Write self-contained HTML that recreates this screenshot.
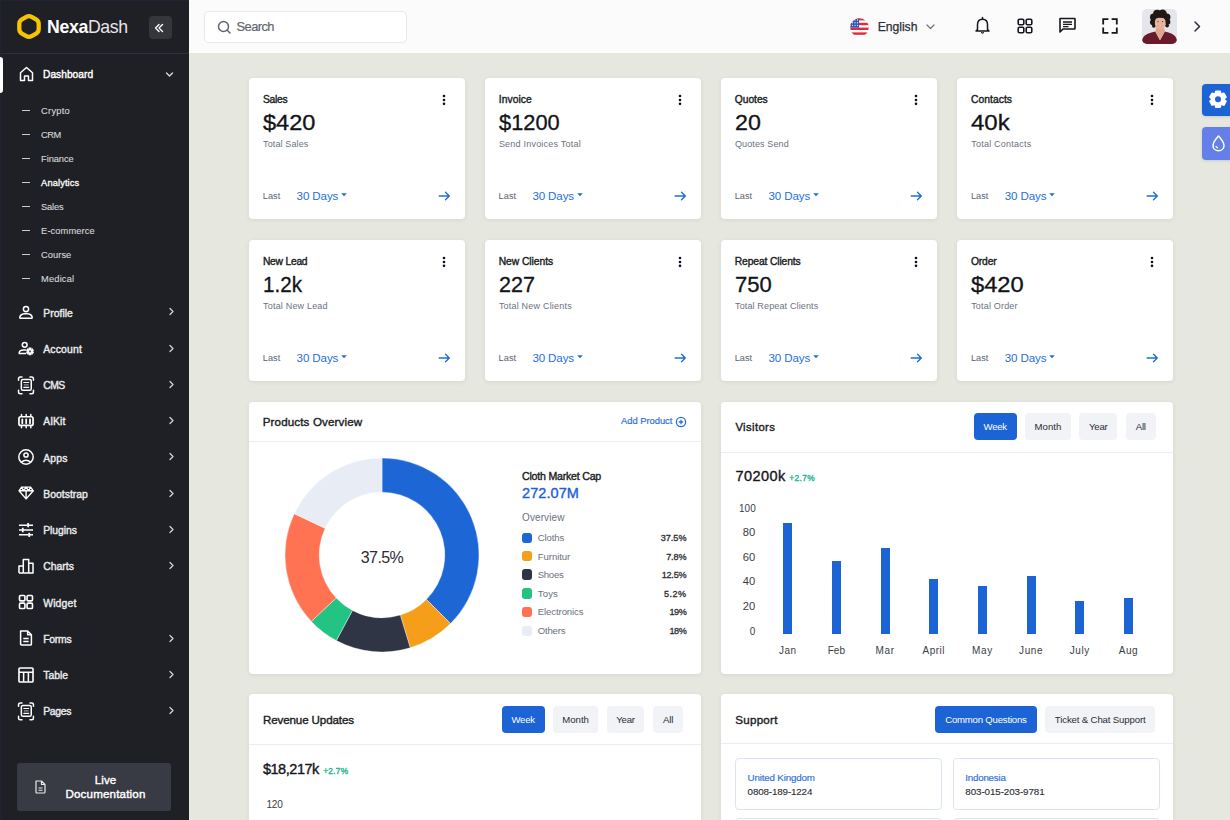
<!DOCTYPE html>
<html><head><meta charset="utf-8"><title>NexaDash</title>
<style>
html,body{margin:0;padding:0;width:1230px;height:820px;overflow:hidden;background:#e6e8e0;font-family:"Liberation Sans", sans-serif;}
.t{position:absolute;white-space:nowrap;line-height:1.1172;}
.r{position:absolute;box-sizing:border-box;}
</style></head><body>

<div class="r" style="left:0.00px;top:0.00px;width:189.00px;height:820.00px;background:#1f2025;border-radius:0px;"></div>
<div class="r" style="left:0.00px;top:53.00px;width:189.00px;height:1.00px;background:#2f3138;border-radius:0px;"></div>
<div class="r" style="left:0.00px;top:0.00px;width:189.00px;height:1.00px;background:#1d2434;border-radius:0px;"></div>
<div class="r" style="left:0.00px;top:0.00px;width:1.00px;height:820.00px;background:#1d2434;border-radius:0px;"></div>
<svg class="r" style="left:14.00px;top:11.00px;" width="30" height="31" viewBox="0 0 30 31"><path d="M12.40 5.80 Q15.00 4.30 17.60 5.80 L22.10 8.40 Q24.70 9.90 24.70 12.90 L24.70 18.10 Q24.70 21.10 22.10 22.60 L17.60 25.20 Q15.00 26.70 12.40 25.20 L7.90 22.60 Q5.30 21.10 5.30 18.10 L5.30 12.90 Q5.30 9.90 7.90 8.40 Z" fill="none" stroke="#f8c400" stroke-width="4.3" stroke-linejoin="round"/></svg>
<div class="t" style="left:47.00px;top:18.00px;font-size:17.70px;color:#fff;font-weight:400;letter-spacing:-0.350px;"><b style="font-weight:700;color:#fff">Nexa</b><span style="color:#e6e6e6">Dash</span></div>
<div class="r" style="left:149.00px;top:15.50px;width:23.00px;height:23.00px;background:#35363c;border-radius:4px;"></div>
<svg class="r" style="left:152.80px;top:21.60px;" width="12" height="12" viewBox="0 0 12 12"><path d="M6 2.5 L2.5 6 L6 9.5 M9.5 2.5 L6 6 L9.5 9.5" fill="none" stroke="#fff" stroke-width="1.4" stroke-linecap="round" stroke-linejoin="round"/></svg>
<div class="r" style="left:0.00px;top:57.00px;width:3.20px;height:36.20px;background:#ffffff;border-radius:0px;border-radius:0 3px 3px 0;"></div>
<svg class="r" style="left:19.00px;top:66.00px;" width="15" height="16" viewBox="0 0 15 16"><path d="M1.5 6.8 L7.5 1.5 L13.5 6.8 V14.5 H9.5 V10 H5.5 V14.5 H1.5 Z" fill="none" stroke="#fff" stroke-width="1.5" stroke-linejoin="round"/></svg>
<div class="t" style="left:43.00px;top:69.00px;font-size:10.20px;color:#fff;font-weight:400;letter-spacing:0.033px;-webkit-text-stroke:0.38px #fff;">Dashboard</div>
<svg class="r" style="left:165.00px;top:71.00px;" width="9" height="7" viewBox="0 0 9 7"><path d="M1.5 2 L4.5 5 L7.5 2" fill="none" stroke="#d8d9de" stroke-width="1.4" stroke-linecap="round" stroke-linejoin="round"/></svg>
<div class="r" style="left:22.40px;top:109.90px;width:7.80px;height:1.20px;background:#c9cacf;border-radius:0px;"></div>
<div class="t" style="left:41.10px;top:106.00px;font-size:9.30px;color:#d5d6da;font-weight:400;letter-spacing:0.236px;-webkit-text-stroke:0.38px #d5d6da;-webkit-text-stroke-width:0.12px;">Crypto</div>
<div class="r" style="left:22.40px;top:133.90px;width:7.80px;height:1.20px;background:#c9cacf;border-radius:0px;"></div>
<div class="t" style="left:41.10px;top:130.00px;font-size:9.30px;color:#d5d6da;font-weight:400;letter-spacing:-0.558px;-webkit-text-stroke:0.38px #d5d6da;-webkit-text-stroke-width:0.12px;">CRM</div>
<div class="r" style="left:22.40px;top:157.90px;width:7.80px;height:1.20px;background:#c9cacf;border-radius:0px;"></div>
<div class="t" style="left:41.10px;top:154.00px;font-size:9.30px;color:#d5d6da;font-weight:400;letter-spacing:-0.084px;-webkit-text-stroke:0.38px #d5d6da;-webkit-text-stroke-width:0.12px;">Finance</div>
<div class="r" style="left:22.40px;top:181.90px;width:7.80px;height:1.20px;background:#c9cacf;border-radius:0px;"></div>
<div class="t" style="left:41.10px;top:178.00px;font-size:9.30px;color:#ffffff;font-weight:400;letter-spacing:0.109px;-webkit-text-stroke:0.38px #ffffff;-webkit-text-stroke-width:0.3px;">Analytics</div>
<div class="r" style="left:22.40px;top:205.90px;width:7.80px;height:1.20px;background:#c9cacf;border-radius:0px;"></div>
<div class="t" style="left:41.10px;top:202.00px;font-size:9.30px;color:#d5d6da;font-weight:400;letter-spacing:-0.198px;-webkit-text-stroke:0.38px #d5d6da;-webkit-text-stroke-width:0.12px;">Sales</div>
<div class="r" style="left:22.40px;top:229.90px;width:7.80px;height:1.20px;background:#c9cacf;border-radius:0px;"></div>
<div class="t" style="left:41.10px;top:226.00px;font-size:9.30px;color:#d5d6da;font-weight:400;letter-spacing:0.085px;-webkit-text-stroke:0.38px #d5d6da;-webkit-text-stroke-width:0.12px;">E-commerce</div>
<div class="r" style="left:22.40px;top:253.90px;width:7.80px;height:1.20px;background:#c9cacf;border-radius:0px;"></div>
<div class="t" style="left:41.10px;top:250.00px;font-size:9.30px;color:#d5d6da;font-weight:400;letter-spacing:0.038px;-webkit-text-stroke:0.38px #d5d6da;-webkit-text-stroke-width:0.12px;">Course</div>
<div class="r" style="left:22.40px;top:277.90px;width:7.80px;height:1.20px;background:#c9cacf;border-radius:0px;"></div>
<div class="t" style="left:41.10px;top:274.00px;font-size:9.30px;color:#d5d6da;font-weight:400;letter-spacing:0.154px;-webkit-text-stroke:0.38px #d5d6da;-webkit-text-stroke-width:0.12px;">Medical</div>
<svg class="r" style="left:16.10px;top:302.20px;" width="20" height="20" viewBox="0 0 20 20"><circle cx="10" cy="7.0" r="2.6" fill="none" stroke="#fff" stroke-linecap="round" stroke-linejoin="round" stroke-width="1.5"/><path d="M4.6 16.2 Q3.8 16.2 3.8 15.4 Q4 11.6 10 11.4 Q16 11.6 16.2 15.4 Q16.2 16.2 15.4 16.2 Z" fill="none" stroke="#fff" stroke-linecap="round" stroke-linejoin="round" stroke-width="1.5"/></svg>
<div class="t" style="left:43.20px;top:308.00px;font-size:10.40px;color:#ececee;font-weight:400;letter-spacing:0.044px;-webkit-text-stroke:0.38px #ececee;">Profile</div>
<svg class="r" style="left:168.00px;top:307.40px;" width="7" height="9" viewBox="0 0 7 9"><path d="M2 1.5 L5 4.5 L2 7.5" fill="none" stroke="#d0d1d6" stroke-width="1.3" stroke-linecap="round" stroke-linejoin="round"/></svg>
<svg class="r" style="left:16.10px;top:338.45px;" width="20" height="20" viewBox="0 0 20 20"><circle cx="8.7" cy="6.85" r="2.4" fill="none" stroke="#fff" stroke-linecap="round" stroke-linejoin="round" stroke-width="1.5"/><path d="M9.6 12 H7.6 Q3.2 12.1 3.2 15 V15.6 H9.6" fill="none" stroke="#fff" stroke-linecap="round" stroke-linejoin="round" stroke-width="1.5"/><path d="M12.774 10.994 L12.750 9.811 L15.250 9.811 L15.226 10.994 L15.471 11.136 L16.483 10.523 L17.733 12.688 L16.696 13.259 L16.696 13.541 L17.733 14.112 L16.483 16.277 L15.471 15.664 L15.226 15.806 L15.250 16.989 L12.750 16.989 L12.774 15.806 L12.529 15.664 L11.517 16.277 L10.267 14.112 L11.304 13.541 L11.304 13.259 L10.267 12.688 L11.517 10.523 L12.529 11.136 Z M15.100 13.400 A1.1 1.1 0 1 0 12.900 13.400 A1.1 1.1 0 1 0 15.100 13.400 Z" fill="#fff" fill-rule="evenodd" stroke="#fff" stroke-width="0.5" stroke-linejoin="round"/></svg>
<div class="t" style="left:43.20px;top:344.00px;font-size:10.40px;color:#ececee;font-weight:400;letter-spacing:0.195px;-webkit-text-stroke:0.38px #ececee;">Account</div>
<svg class="r" style="left:168.00px;top:343.65px;" width="7" height="9" viewBox="0 0 7 9"><path d="M2 1.5 L5 4.5 L2 7.5" fill="none" stroke="#d0d1d6" stroke-width="1.3" stroke-linecap="round" stroke-linejoin="round"/></svg>
<svg class="r" style="left:16.10px;top:374.70px;" width="20" height="20" viewBox="0 0 20 20"><path d="M2.55 5.3 V3.7 Q2.55 1.95 4.3 1.95 H6 M14 1.95 H15.7 Q17.45 1.95 17.45 3.7 V5.3 M17.45 15.3 V16.9 Q17.45 18.65 15.7 18.65 H14 M6 18.65 H4.3 Q2.55 18.65 2.55 16.9 V15.3" fill="none" stroke="#fff" stroke-linecap="round" stroke-linejoin="round" stroke-width="1.5"/><rect x="5.35" y="4.45" width="9.9" height="10.8" rx="1.6" fill="none" stroke="#fff" stroke-linecap="round" stroke-linejoin="round" stroke-width="1.5"/><path d="M7.8 7.5 H12.7 M7.8 12.3 H12.7" fill="none" stroke="#fff" stroke-linecap="round" stroke-linejoin="round" stroke-width="1.2"/><path d="M7.8 9.9 H12.7" stroke="#9a9ba0" stroke-width="1.2"/></svg>
<div class="t" style="left:43.20px;top:380.00px;font-size:10.40px;color:#ececee;font-weight:400;letter-spacing:-0.539px;-webkit-text-stroke:0.38px #ececee;">CMS</div>
<svg class="r" style="left:168.00px;top:379.90px;" width="7" height="9" viewBox="0 0 7 9"><path d="M2 1.5 L5 4.5 L2 7.5" fill="none" stroke="#d0d1d6" stroke-width="1.3" stroke-linecap="round" stroke-linejoin="round"/></svg>
<svg class="r" style="left:16.10px;top:410.95px;" width="20" height="20" viewBox="0 0 20 20"><rect x="2.95" y="5.75" width="14.1" height="8.7" rx="1.8" fill="none" stroke="#fff" stroke-linecap="round" stroke-linejoin="round" stroke-width="1.7"/><path d="M5.5 3.4 V5.2 M10.2 3.4 V5.2 M14.8 3.4 V5.2 M5.5 15 V16.8 M10.2 15 V16.8 M14.8 15 V16.8" fill="none" stroke="#fff" stroke-linecap="round" stroke-linejoin="round" stroke-width="1.5"/><path d="M6.3 8.3 V12.2 M10.2 8.3 V12.2 M14 8.3 V12.2" fill="none" stroke="#fff" stroke-linecap="round" stroke-linejoin="round" stroke-width="1.8"/></svg>
<div class="t" style="left:43.20px;top:416.00px;font-size:10.40px;color:#ececee;font-weight:400;letter-spacing:0.041px;-webkit-text-stroke:0.38px #ececee;">AIKit</div>
<svg class="r" style="left:168.00px;top:416.15px;" width="7" height="9" viewBox="0 0 7 9"><path d="M2 1.5 L5 4.5 L2 7.5" fill="none" stroke="#d0d1d6" stroke-width="1.3" stroke-linecap="round" stroke-linejoin="round"/></svg>
<svg class="r" style="left:16.10px;top:447.20px;" width="20" height="20" viewBox="0 0 20 20"><circle cx="10" cy="10" r="7.2" fill="none" stroke="#fff" stroke-linecap="round" stroke-linejoin="round" stroke-width="1.5"/><circle cx="10" cy="8" r="2.1" fill="none" stroke="#fff" stroke-linecap="round" stroke-linejoin="round" stroke-width="1.5"/><path d="M5.4 15.1 Q10 11.6 14.6 15.1" fill="none" stroke="#fff" stroke-linecap="round" stroke-linejoin="round" stroke-width="1.5"/></svg>
<div class="t" style="left:43.20px;top:453.00px;font-size:10.40px;color:#ececee;font-weight:400;letter-spacing:0.176px;-webkit-text-stroke:0.38px #ececee;">Apps</div>
<svg class="r" style="left:168.00px;top:452.40px;" width="7" height="9" viewBox="0 0 7 9"><path d="M2 1.5 L5 4.5 L2 7.5" fill="none" stroke="#d0d1d6" stroke-width="1.3" stroke-linecap="round" stroke-linejoin="round"/></svg>
<svg class="r" style="left:16.10px;top:483.45px;" width="20" height="20" viewBox="0 0 20 20"><path d="M5.6 4.1 H14.6 L17.3 7.8 L10.1 15.9 L3 7.8 Z M3 7.8 H17.3 M5.6 4.1 L7.6 7.8 L10.1 4.1 L12.6 7.8 L14.6 4.1 M10.1 7.8 V14.6" fill="none" stroke="#fff" stroke-linecap="round" stroke-linejoin="round" stroke-width="1.4"/></svg>
<div class="t" style="left:43.20px;top:489.00px;font-size:10.40px;color:#ececee;font-weight:400;letter-spacing:0.029px;-webkit-text-stroke:0.38px #ececee;">Bootstrap</div>
<svg class="r" style="left:168.00px;top:488.65px;" width="7" height="9" viewBox="0 0 7 9"><path d="M2 1.5 L5 4.5 L2 7.5" fill="none" stroke="#d0d1d6" stroke-width="1.3" stroke-linecap="round" stroke-linejoin="round"/></svg>
<svg class="r" style="left:16.10px;top:519.70px;" width="20" height="20" viewBox="0 0 20 20"><g transform="translate(10,10) scale(1.08) translate(-7.5,-7.5)"><path d="M1 3 H14 M1 7.5 H14 M1 12 H14" stroke="#fff" stroke-width="1.4"/><path d="M9.5 1 V5 M4.5 5.5 V9.5 M10.5 10 V14" stroke="#fff" stroke-width="1.6"/></g></svg>
<div class="t" style="left:43.20px;top:525.00px;font-size:10.40px;color:#ececee;font-weight:400;letter-spacing:-0.063px;-webkit-text-stroke:0.38px #ececee;">Plugins</div>
<svg class="r" style="left:168.00px;top:524.90px;" width="7" height="9" viewBox="0 0 7 9"><path d="M2 1.5 L5 4.5 L2 7.5" fill="none" stroke="#d0d1d6" stroke-width="1.3" stroke-linecap="round" stroke-linejoin="round"/></svg>
<svg class="r" style="left:16.10px;top:555.95px;" width="20" height="20" viewBox="0 0 20 20"><g transform="translate(10,10) scale(1.08) translate(-7.5,-7.5)"><path d="M1 14 V7.5 H5 V14 M5 14 V1.5 H10 V14 M10 14 V5 H14 V14 Z M1 14 H14" fill="none" stroke="#fff" stroke-width="1.4" stroke-linejoin="round"/></g></svg>
<div class="t" style="left:43.20px;top:561.00px;font-size:10.40px;color:#ececee;font-weight:400;letter-spacing:0.021px;-webkit-text-stroke:0.38px #ececee;">Charts</div>
<svg class="r" style="left:168.00px;top:561.15px;" width="7" height="9" viewBox="0 0 7 9"><path d="M2 1.5 L5 4.5 L2 7.5" fill="none" stroke="#d0d1d6" stroke-width="1.3" stroke-linecap="round" stroke-linejoin="round"/></svg>
<svg class="r" style="left:16.10px;top:592.20px;" width="20" height="20" viewBox="0 0 20 20"><g transform="translate(10,10) scale(1.08) translate(-7.5,-7.5)"><rect x="1.5" y="1.5" width="5" height="5" rx="1" fill="none" stroke="#fff" stroke-width="1.5"/><rect x="8.5" y="1.5" width="5" height="5" rx="1" fill="none" stroke="#fff" stroke-width="1.5"/><rect x="1.5" y="8.5" width="5" height="5" rx="1" fill="none" stroke="#fff" stroke-width="1.5"/><rect x="8.5" y="8.5" width="5" height="5" rx="1" fill="none" stroke="#fff" stroke-width="1.5"/></g></svg>
<div class="t" style="left:43.20px;top:598.00px;font-size:10.40px;color:#ececee;font-weight:400;letter-spacing:0.154px;-webkit-text-stroke:0.38px #ececee;">Widget</div>
<svg class="r" style="left:16.10px;top:628.45px;" width="20" height="20" viewBox="0 0 20 20"><g transform="translate(10,10) scale(1.08) translate(-7.5,-7.5)"><path d="M2.5 1 H9 L12.5 4.5 V13 Q12.5 14 11.5 14 H3.5 Q2.5 14 2.5 13 Z M9 1 V4.5 H12.5" fill="none" stroke="#fff" stroke-width="1.4" stroke-linejoin="round"/><path d="M5 8 H10 M5 10.8 H10" stroke="#fff" stroke-width="1.3"/></g></svg>
<div class="t" style="left:43.20px;top:634.00px;font-size:10.40px;color:#ececee;font-weight:400;letter-spacing:-0.230px;-webkit-text-stroke:0.38px #ececee;">Forms</div>
<svg class="r" style="left:168.00px;top:633.65px;" width="7" height="9" viewBox="0 0 7 9"><path d="M2 1.5 L5 4.5 L2 7.5" fill="none" stroke="#d0d1d6" stroke-width="1.3" stroke-linecap="round" stroke-linejoin="round"/></svg>
<svg class="r" style="left:16.10px;top:664.70px;" width="20" height="20" viewBox="0 0 20 20"><g transform="translate(10,10) scale(1.08) translate(-7.5,-7.5)"><rect x="1" y="1" width="13" height="13" rx="1" fill="none" stroke="#fff" stroke-width="1.5"/><path d="M1 5 H14 M5.3 5 V14 M9.7 5 V14" stroke="#fff" stroke-width="1.4"/></g></svg>
<div class="t" style="left:43.20px;top:670.00px;font-size:10.40px;color:#ececee;font-weight:400;letter-spacing:0.018px;-webkit-text-stroke:0.38px #ececee;">Table</div>
<svg class="r" style="left:168.00px;top:669.90px;" width="7" height="9" viewBox="0 0 7 9"><path d="M2 1.5 L5 4.5 L2 7.5" fill="none" stroke="#d0d1d6" stroke-width="1.3" stroke-linecap="round" stroke-linejoin="round"/></svg>
<svg class="r" style="left:16.10px;top:700.95px;" width="20" height="20" viewBox="0 0 20 20"><path d="M2.55 5.3 V3.7 Q2.55 1.95 4.3 1.95 H6 M14 1.95 H15.7 Q17.45 1.95 17.45 3.7 V5.3 M17.45 15.3 V16.9 Q17.45 18.65 15.7 18.65 H14 M6 18.65 H4.3 Q2.55 18.65 2.55 16.9 V15.3" fill="none" stroke="#fff" stroke-linecap="round" stroke-linejoin="round" stroke-width="1.5"/><rect x="5.35" y="4.45" width="9.9" height="10.8" rx="1.6" fill="none" stroke="#fff" stroke-linecap="round" stroke-linejoin="round" stroke-width="1.5"/><path d="M7.8 7.5 H12.7 M7.8 12.3 H12.7" fill="none" stroke="#fff" stroke-linecap="round" stroke-linejoin="round" stroke-width="1.2"/><path d="M7.8 9.9 H12.7" stroke="#9a9ba0" stroke-width="1.2"/></svg>
<div class="t" style="left:43.20px;top:706.00px;font-size:10.40px;color:#ececee;font-weight:400;letter-spacing:-0.313px;-webkit-text-stroke:0.38px #ececee;">Pages</div>
<svg class="r" style="left:168.00px;top:706.15px;" width="7" height="9" viewBox="0 0 7 9"><path d="M2 1.5 L5 4.5 L2 7.5" fill="none" stroke="#d0d1d6" stroke-width="1.3" stroke-linecap="round" stroke-linejoin="round"/></svg>
<div class="r" style="left:17.00px;top:763.20px;width:154.20px;height:47.60px;background:#393b44;border-radius:3px;"></div>
<svg class="r" style="left:34.00px;top:780.00px;" width="13" height="14" viewBox="0 0 13 14"><path d="M2 1 H7.5 L11 4.5 V12 Q11 13 10 13 H3 Q2 13 2 12 Z M7.5 1 V4.5 H11" fill="none" stroke="#e8e8ea" stroke-width="1.2" stroke-linejoin="round"/><path d="M4.5 8 H8.5 M4.5 10.3 H8.5" stroke="#e8e8ea" stroke-width="1.1"/></svg>
<div class="t" style="left:-94.50px;width:400px;text-align:center;top:774.00px;font-size:11.60px;color:#fff;font-weight:400;letter-spacing:0.061px;-webkit-text-stroke:0.38px #fff;">Live</div>
<div class="t" style="left:-94.50px;width:400px;text-align:center;top:788.00px;font-size:11.60px;color:#fff;font-weight:400;letter-spacing:0.173px;-webkit-text-stroke:0.38px #fff;">Documentation</div>
<div class="r" style="left:189.00px;top:0.00px;width:1041.00px;height:53.00px;background:#fbfbfb;border-radius:0px;"></div>
<div class="r" style="left:204.30px;top:11.00px;width:203.00px;height:31.60px;background:#ffffff;border-radius:5px;border:1px solid #e7e8eb;"></div>
<svg class="r" style="left:217.00px;top:20.00px;" width="15" height="15" viewBox="0 0 15 15"><circle cx="6.5" cy="6.5" r="5" fill="none" stroke="#5f6672" stroke-width="1.5"/><path d="M10.3 10.3 L13 13" stroke="#5f6672" stroke-width="1.5" stroke-linecap="round"/></svg>
<div class="t" style="left:236.50px;top:20.00px;font-size:12.90px;color:#5f6672;font-weight:400;letter-spacing:-0.566px;-webkit-text-stroke:0.38px #5f6672;-webkit-text-stroke-width:0.2px;">Search</div>
<svg class="r" style="left:850.00px;top:17.60px;" width="19" height="19" viewBox="0 0 19 19"><defs><clipPath id="fc"><circle cx="9.5" cy="9.5" r="9.3"/></clipPath></defs>
<g clip-path="url(#fc)"><rect width="19" height="19" fill="#fff"/>
<rect y="0" width="19" height="2.4" fill="#e0293a"/><rect y="4.8" width="19" height="2.4" fill="#e0293a"/><rect y="9.6" width="19" height="2.4" fill="#e0293a"/><rect y="14.4" width="19" height="2.4" fill="#e0293a"/>
<rect width="9" height="9.6" fill="#2c55b4"/>
<g fill="#fff" opacity="0.85"><circle cx="2.5" cy="2" r="0.7"/><circle cx="5" cy="2" r="0.7"/><circle cx="7.5" cy="2" r="0.7"/><circle cx="2.5" cy="4.7" r="0.7"/><circle cx="5" cy="4.7" r="0.7"/><circle cx="7.5" cy="4.7" r="0.7"/><circle cx="2.5" cy="7.4" r="0.7"/><circle cx="5" cy="7.4" r="0.7"/><circle cx="7.5" cy="7.4" r="0.7"/></g></g></svg>
<div class="t" style="left:877.70px;top:21.00px;font-size:12.20px;color:#2b2e36;font-weight:400;letter-spacing:-0.033px;-webkit-text-stroke:0.38px #2b2e36;-webkit-text-stroke-width:0.25px;">English</div>
<svg class="r" style="left:925.00px;top:22.00px;" width="11" height="9" viewBox="0 0 11 9"><path d="M2 3 L5.5 6.5 L9 3" fill="none" stroke="#6b7280" stroke-width="1.2" stroke-linecap="round" stroke-linejoin="round"/></svg>
<svg class="r" style="left:974.00px;top:16.00px;" width="17" height="19" viewBox="0 0 17 19"><path d="M3.5 13.5 V8.5 C3.5 5.3 5.5 3.2 8.5 3.2 C11.5 3.2 13.5 5.3 13.5 8.5 V13.5 L15 15 H2 L3.5 13.5 Z" fill="none" stroke="#15171c" stroke-width="1.5" stroke-linejoin="round"/><path d="M8.5 1.5 V3.2" stroke="#15171c" stroke-width="1.5" stroke-linecap="round"/><path d="M7 16.5 Q8.5 18 10 16.5" fill="#15171c" stroke="#15171c" stroke-width="1"/></svg>
<svg class="r" style="left:1016.00px;top:17.00px;" width="18" height="18" viewBox="0 0 18 18"><rect x="2.2" y="2.2" width="5.6" height="5.6" rx="1.3" fill="none" stroke="#15171c" stroke-width="1.6"/><rect x="10.2" y="2.2" width="5.6" height="5.6" rx="1.3" fill="none" stroke="#15171c" stroke-width="1.6"/><rect x="2.2" y="10.2" width="5.6" height="5.6" rx="1.3" fill="none" stroke="#15171c" stroke-width="1.6"/><rect x="10.2" y="10.2" width="5.6" height="5.6" rx="1.3" fill="none" stroke="#15171c" stroke-width="1.6"/></svg>
<svg class="r" style="left:1058.00px;top:16.00px;" width="19" height="18" viewBox="0 0 19 18"><path d="M2 2.5 H16.5 Q17 2.5 17 3 V12.5 Q17 13 16.5 13 H5 L2 16 V3 Q2 2.5 2.5 2.5 Z" fill="none" stroke="#15171c" stroke-width="1.6" stroke-linejoin="round"/><path d="M5 6 H14 M5 8.3 H14 M5 10.6 H10.5" stroke="#15171c" stroke-width="1.3"/></svg>
<svg class="r" style="left:1101.00px;top:17.00px;" width="18" height="18" viewBox="0 0 18 18"><path d="M2.2 6.5 V2.2 H6.5 M11.5 2.2 H15.8 V6.5 M15.8 11.5 V15.8 H11.5 M6.5 15.8 H2.2 V11.5" fill="none" stroke="#15171c" stroke-width="1.8" stroke-linecap="square"/></svg>
<svg class="r" style="left:1141.80px;top:8.80px;" width="35" height="35" viewBox="0 0 35 35"><defs><clipPath id="av"><rect width="35" height="35" rx="5"/></clipPath></defs>
<g clip-path="url(#av)"><rect width="35" height="35" fill="#e5e6eb"/>
<g fill="#201814"><circle cx="11.6" cy="8.2" r="3.6"/><circle cx="15.2" cy="4.9" r="4.1"/><circle cx="20.6" cy="4.6" r="4.2"/><circle cx="24.8" cy="8.2" r="3.6"/><circle cx="10.9" cy="13.2" r="2.9"/><circle cx="25.7" cy="13" r="2.7"/><circle cx="11.8" cy="16.8" r="1.9"/><circle cx="25.1" cy="16.6" r="1.9"/></g>
<path d="M0 35 V31 Q1 25.8 9.5 23.6 L13.3 22.6 L18 31.2 L22.8 22.6 L26.5 23.6 Q34 25.8 35 31 V35 Z" fill="#6b1a2b"/>
<path d="M14.2 18 L13.3 22.6 L18 31.2 L22.8 22.6 L22 18 Z" fill="#dea88e"/>
<ellipse cx="18.2" cy="13.6" rx="5.4" ry="6.6" fill="#e6b39c"/>
<path d="M12.6 10.8 Q13.6 6.2 18.2 6.8 Q22.8 6.2 23.8 10.8 Q22 8.6 18.2 8.9 Q14.3 8.6 12.6 10.8 Z" fill="#201814"/>
<circle cx="16" cy="12.6" r="0.65" fill="#5a3a30"/><circle cx="20.5" cy="12.6" r="0.65" fill="#5a3a30"/>
<path d="M15.9 16.2 Q18.2 18.3 20.5 16.2" fill="#f4e6e0" stroke="#b87865" stroke-width="0.5"/>
</g></svg>
<svg class="r" style="left:1192.00px;top:20.00px;" width="11" height="13" viewBox="0 0 11 13"><path d="M3 2 L7.5 6.5 L3 11" fill="none" stroke="#2a3040" stroke-width="1.5" stroke-linecap="round" stroke-linejoin="round"/></svg>
<div class="r" style="left:1202.00px;top:84.00px;width:33.00px;height:32.30px;background:#1c64d6;border-radius:4px;box-shadow:0 1px 3px rgba(0,0,0,.12);"></div>
<svg class="r" style="left:1206.00px;top:87.20px;" width="24" height="24" viewBox="0 0 24 24"><path d="M9.460 6.875 L9.904 4.376 L14.096 4.376 L14.540 6.875 L15.342 7.338 L17.728 6.472 L19.824 10.104 L17.882 11.737 L17.882 12.663 L19.824 14.296 L17.728 17.928 L15.342 17.062 L14.540 17.525 L14.096 20.024 L9.904 20.024 L9.460 17.525 L8.658 17.062 L6.272 17.928 L4.176 14.296 L6.118 12.663 L6.118 11.737 L4.176 10.104 L6.272 6.472 L8.658 7.338 Z M16.000 12.200 A4.0 4.0 0 1 0 8.000 12.200 A4.0 4.0 0 1 0 16.000 12.200 Z" fill="#fff" fill-rule="evenodd" stroke="#fff" stroke-width="2.0" stroke-linejoin="round"/></svg>
<div class="r" style="left:1202.00px;top:127.30px;width:33.00px;height:32.30px;background:#6480e8;border-radius:4px;box-shadow:0 1px 3px rgba(0,0,0,.12);"></div>
<svg class="r" style="left:1210.00px;top:134.00px;" width="17" height="19" viewBox="0 0 17 19"><path d="M8.5 2 C8.5 2 3 8 3 11.5 C3 14.6 5.5 16.8 8.5 16.8 C11.5 16.8 14 14.6 14 11.5 C14 8 8.5 2 8.5 2 Z" fill="none" stroke="#fff" stroke-width="1.5" stroke-linejoin="round"/><path d="M6 12.5 L7.5 13.8" stroke="#fff" stroke-width="1.2" stroke-linecap="round"/></svg>
<div class="r" style="left:249.00px;top:78.00px;width:216.30px;height:141.40px;background:#ffffff;border-radius:4px;box-shadow:0 1px 4px rgba(60,70,50,.10);"></div>
<div class="t" style="left:262.90px;top:94.00px;font-size:10.30px;color:#1a1c22;font-weight:400;letter-spacing:-0.263px;-webkit-text-stroke:0.38px #1a1c22;">Sales</div>
<div class="t" style="left:263.10px;top:112.00px;font-size:21.40px;color:#121418;font-weight:400;transform:scaleX(1.1019);transform-origin:left;-webkit-text-stroke:0.38px #121418;-webkit-text-stroke-width:0.3px;">$420</div>
<div class="t" style="left:263.10px;top:139.00px;font-size:9.00px;color:#6b7280;font-weight:400;letter-spacing:0.113px;">Total Sales</div>
<div class="t" style="left:262.80px;top:191.00px;font-size:9.20px;color:#5b6270;font-weight:400;letter-spacing:0.031px;">Last</div>
<div class="t" style="left:296.60px;top:190.00px;font-size:11.60px;color:#1f6fd8;font-weight:400;letter-spacing:-0.128px;">30 Days</div>
<svg class="r" style="left:341.20px;top:193.30px;" width="6" height="4" viewBox="0 0 6 4"><path d="M0.2 0.2 H5.8 L3 3.2 Z" fill="#1f6fd8"/></svg>
<svg class="r" style="left:437.80px;top:191.00px;" width="13" height="10" viewBox="0 0 13 10"><path d="M1.2 5 H11.2 M7.5 1.2 L11.3 5 L7.5 8.8" fill="none" stroke="#1f6fd8" stroke-width="1.4" stroke-linecap="round" stroke-linejoin="round"/></svg>
<svg class="r" style="left:440.80px;top:92.60px;" width="6" height="13" viewBox="0 0 6 13"><circle cx="3" cy="3.05" r="1.3" fill="#0d1020"/><circle cx="3" cy="6.95" r="1.3" fill="#0d1020"/><circle cx="3" cy="10.85" r="1.3" fill="#0d1020"/></svg>
<div class="r" style="left:484.80px;top:78.00px;width:216.30px;height:141.40px;background:#ffffff;border-radius:4px;box-shadow:0 1px 4px rgba(60,70,50,.10);"></div>
<div class="t" style="left:498.70px;top:94.00px;font-size:10.30px;color:#1a1c22;font-weight:400;letter-spacing:0.079px;-webkit-text-stroke:0.38px #1a1c22;">Invoice</div>
<div class="t" style="left:498.90px;top:112.00px;font-size:21.40px;color:#121418;font-weight:400;transform:scaleX(1.0200);transform-origin:left;-webkit-text-stroke:0.38px #121418;-webkit-text-stroke-width:0.3px;">$1200</div>
<div class="t" style="left:498.90px;top:139.00px;font-size:9.00px;color:#6b7280;font-weight:400;letter-spacing:0.215px;">Send Invoices Total</div>
<div class="t" style="left:498.60px;top:191.00px;font-size:9.20px;color:#5b6270;font-weight:400;letter-spacing:0.031px;">Last</div>
<div class="t" style="left:532.40px;top:190.00px;font-size:11.60px;color:#1f6fd8;font-weight:400;letter-spacing:-0.128px;">30 Days</div>
<svg class="r" style="left:577.00px;top:193.30px;" width="6" height="4" viewBox="0 0 6 4"><path d="M0.2 0.2 H5.8 L3 3.2 Z" fill="#1f6fd8"/></svg>
<svg class="r" style="left:673.60px;top:191.00px;" width="13" height="10" viewBox="0 0 13 10"><path d="M1.2 5 H11.2 M7.5 1.2 L11.3 5 L7.5 8.8" fill="none" stroke="#1f6fd8" stroke-width="1.4" stroke-linecap="round" stroke-linejoin="round"/></svg>
<svg class="r" style="left:676.60px;top:92.60px;" width="6" height="13" viewBox="0 0 6 13"><circle cx="3" cy="3.05" r="1.3" fill="#0d1020"/><circle cx="3" cy="6.95" r="1.3" fill="#0d1020"/><circle cx="3" cy="10.85" r="1.3" fill="#0d1020"/></svg>
<div class="r" style="left:720.90px;top:78.00px;width:216.30px;height:141.40px;background:#ffffff;border-radius:4px;box-shadow:0 1px 4px rgba(60,70,50,.10);"></div>
<div class="t" style="left:734.80px;top:94.00px;font-size:10.30px;color:#1a1c22;font-weight:400;letter-spacing:-0.058px;-webkit-text-stroke:0.38px #1a1c22;">Quotes</div>
<div class="t" style="left:735.00px;top:112.00px;font-size:21.40px;color:#121418;font-weight:400;transform:scaleX(1.0854);transform-origin:left;-webkit-text-stroke:0.38px #121418;-webkit-text-stroke-width:0.3px;">20</div>
<div class="t" style="left:735.00px;top:139.00px;font-size:9.00px;color:#6b7280;font-weight:400;letter-spacing:0.111px;">Quotes Send</div>
<div class="t" style="left:734.70px;top:191.00px;font-size:9.20px;color:#5b6270;font-weight:400;letter-spacing:0.031px;">Last</div>
<div class="t" style="left:768.50px;top:190.00px;font-size:11.60px;color:#1f6fd8;font-weight:400;letter-spacing:-0.128px;">30 Days</div>
<svg class="r" style="left:813.10px;top:193.30px;" width="6" height="4" viewBox="0 0 6 4"><path d="M0.2 0.2 H5.8 L3 3.2 Z" fill="#1f6fd8"/></svg>
<svg class="r" style="left:909.70px;top:191.00px;" width="13" height="10" viewBox="0 0 13 10"><path d="M1.2 5 H11.2 M7.5 1.2 L11.3 5 L7.5 8.8" fill="none" stroke="#1f6fd8" stroke-width="1.4" stroke-linecap="round" stroke-linejoin="round"/></svg>
<svg class="r" style="left:912.70px;top:92.60px;" width="6" height="13" viewBox="0 0 6 13"><circle cx="3" cy="3.05" r="1.3" fill="#0d1020"/><circle cx="3" cy="6.95" r="1.3" fill="#0d1020"/><circle cx="3" cy="10.85" r="1.3" fill="#0d1020"/></svg>
<div class="r" style="left:957.10px;top:78.00px;width:216.30px;height:141.40px;background:#ffffff;border-radius:4px;box-shadow:0 1px 4px rgba(60,70,50,.10);"></div>
<div class="t" style="left:971.00px;top:94.00px;font-size:10.30px;color:#1a1c22;font-weight:400;letter-spacing:0.053px;-webkit-text-stroke:0.38px #1a1c22;">Contacts</div>
<div class="t" style="left:971.20px;top:112.00px;font-size:21.40px;color:#121418;font-weight:400;transform:scaleX(1.1235);transform-origin:left;-webkit-text-stroke:0.38px #121418;-webkit-text-stroke-width:0.3px;">40k</div>
<div class="t" style="left:971.20px;top:139.00px;font-size:9.00px;color:#6b7280;font-weight:400;letter-spacing:0.233px;">Total Contacts</div>
<div class="t" style="left:970.90px;top:191.00px;font-size:9.20px;color:#5b6270;font-weight:400;letter-spacing:0.031px;">Last</div>
<div class="t" style="left:1004.70px;top:190.00px;font-size:11.60px;color:#1f6fd8;font-weight:400;letter-spacing:-0.128px;">30 Days</div>
<svg class="r" style="left:1049.30px;top:193.30px;" width="6" height="4" viewBox="0 0 6 4"><path d="M0.2 0.2 H5.8 L3 3.2 Z" fill="#1f6fd8"/></svg>
<svg class="r" style="left:1145.90px;top:191.00px;" width="13" height="10" viewBox="0 0 13 10"><path d="M1.2 5 H11.2 M7.5 1.2 L11.3 5 L7.5 8.8" fill="none" stroke="#1f6fd8" stroke-width="1.4" stroke-linecap="round" stroke-linejoin="round"/></svg>
<svg class="r" style="left:1148.90px;top:92.60px;" width="6" height="13" viewBox="0 0 6 13"><circle cx="3" cy="3.05" r="1.3" fill="#0d1020"/><circle cx="3" cy="6.95" r="1.3" fill="#0d1020"/><circle cx="3" cy="10.85" r="1.3" fill="#0d1020"/></svg>
<div class="r" style="left:249.00px;top:240.00px;width:216.30px;height:141.40px;background:#ffffff;border-radius:4px;box-shadow:0 1px 4px rgba(60,70,50,.10);"></div>
<div class="t" style="left:262.90px;top:256.00px;font-size:10.30px;color:#1a1c22;font-weight:400;letter-spacing:-0.238px;-webkit-text-stroke:0.38px #1a1c22;">New Lead</div>
<div class="t" style="left:263.10px;top:274.00px;font-size:21.40px;color:#121418;font-weight:400;transform:scaleX(0.9651);transform-origin:left;-webkit-text-stroke:0.38px #121418;-webkit-text-stroke-width:0.3px;">1.2k</div>
<div class="t" style="left:263.10px;top:301.00px;font-size:9.00px;color:#6b7280;font-weight:400;letter-spacing:0.186px;">Total New Lead</div>
<div class="t" style="left:262.80px;top:353.00px;font-size:9.20px;color:#5b6270;font-weight:400;letter-spacing:0.031px;">Last</div>
<div class="t" style="left:296.60px;top:352.00px;font-size:11.60px;color:#1f6fd8;font-weight:400;letter-spacing:-0.128px;">30 Days</div>
<svg class="r" style="left:341.20px;top:355.30px;" width="6" height="4" viewBox="0 0 6 4"><path d="M0.2 0.2 H5.8 L3 3.2 Z" fill="#1f6fd8"/></svg>
<svg class="r" style="left:437.80px;top:353.00px;" width="13" height="10" viewBox="0 0 13 10"><path d="M1.2 5 H11.2 M7.5 1.2 L11.3 5 L7.5 8.8" fill="none" stroke="#1f6fd8" stroke-width="1.4" stroke-linecap="round" stroke-linejoin="round"/></svg>
<svg class="r" style="left:440.80px;top:254.60px;" width="6" height="13" viewBox="0 0 6 13"><circle cx="3" cy="3.05" r="1.3" fill="#0d1020"/><circle cx="3" cy="6.95" r="1.3" fill="#0d1020"/><circle cx="3" cy="10.85" r="1.3" fill="#0d1020"/></svg>
<div class="r" style="left:484.80px;top:240.00px;width:216.30px;height:141.40px;background:#ffffff;border-radius:4px;box-shadow:0 1px 4px rgba(60,70,50,.10);"></div>
<div class="t" style="left:498.70px;top:256.00px;font-size:10.30px;color:#1a1c22;font-weight:400;letter-spacing:-0.043px;-webkit-text-stroke:0.38px #1a1c22;">New Clients</div>
<div class="t" style="left:498.90px;top:274.00px;font-size:21.40px;color:#121418;font-weight:400;transform:scaleX(1.0073);transform-origin:left;-webkit-text-stroke:0.38px #121418;-webkit-text-stroke-width:0.3px;">227</div>
<div class="t" style="left:498.90px;top:301.00px;font-size:9.00px;color:#6b7280;font-weight:400;letter-spacing:0.202px;">Total New Clients</div>
<div class="t" style="left:498.60px;top:353.00px;font-size:9.20px;color:#5b6270;font-weight:400;letter-spacing:0.031px;">Last</div>
<div class="t" style="left:532.40px;top:352.00px;font-size:11.60px;color:#1f6fd8;font-weight:400;letter-spacing:-0.128px;">30 Days</div>
<svg class="r" style="left:577.00px;top:355.30px;" width="6" height="4" viewBox="0 0 6 4"><path d="M0.2 0.2 H5.8 L3 3.2 Z" fill="#1f6fd8"/></svg>
<svg class="r" style="left:673.60px;top:353.00px;" width="13" height="10" viewBox="0 0 13 10"><path d="M1.2 5 H11.2 M7.5 1.2 L11.3 5 L7.5 8.8" fill="none" stroke="#1f6fd8" stroke-width="1.4" stroke-linecap="round" stroke-linejoin="round"/></svg>
<svg class="r" style="left:676.60px;top:254.60px;" width="6" height="13" viewBox="0 0 6 13"><circle cx="3" cy="3.05" r="1.3" fill="#0d1020"/><circle cx="3" cy="6.95" r="1.3" fill="#0d1020"/><circle cx="3" cy="10.85" r="1.3" fill="#0d1020"/></svg>
<div class="r" style="left:720.90px;top:240.00px;width:216.30px;height:141.40px;background:#ffffff;border-radius:4px;box-shadow:0 1px 4px rgba(60,70,50,.10);"></div>
<div class="t" style="left:734.80px;top:256.00px;font-size:10.30px;color:#1a1c22;font-weight:400;letter-spacing:-0.126px;-webkit-text-stroke:0.38px #1a1c22;">Repeat Clients</div>
<div class="t" style="left:735.00px;top:274.00px;font-size:21.40px;color:#121418;font-weight:400;transform:scaleX(1.0302);transform-origin:left;-webkit-text-stroke:0.38px #121418;-webkit-text-stroke-width:0.3px;">750</div>
<div class="t" style="left:735.00px;top:301.00px;font-size:9.00px;color:#6b7280;font-weight:400;letter-spacing:0.143px;">Total Repeat Clients</div>
<div class="t" style="left:734.70px;top:353.00px;font-size:9.20px;color:#5b6270;font-weight:400;letter-spacing:0.031px;">Last</div>
<div class="t" style="left:768.50px;top:352.00px;font-size:11.60px;color:#1f6fd8;font-weight:400;letter-spacing:-0.128px;">30 Days</div>
<svg class="r" style="left:813.10px;top:355.30px;" width="6" height="4" viewBox="0 0 6 4"><path d="M0.2 0.2 H5.8 L3 3.2 Z" fill="#1f6fd8"/></svg>
<svg class="r" style="left:909.70px;top:353.00px;" width="13" height="10" viewBox="0 0 13 10"><path d="M1.2 5 H11.2 M7.5 1.2 L11.3 5 L7.5 8.8" fill="none" stroke="#1f6fd8" stroke-width="1.4" stroke-linecap="round" stroke-linejoin="round"/></svg>
<svg class="r" style="left:912.70px;top:254.60px;" width="6" height="13" viewBox="0 0 6 13"><circle cx="3" cy="3.05" r="1.3" fill="#0d1020"/><circle cx="3" cy="6.95" r="1.3" fill="#0d1020"/><circle cx="3" cy="10.85" r="1.3" fill="#0d1020"/></svg>
<div class="r" style="left:957.10px;top:240.00px;width:216.30px;height:141.40px;background:#ffffff;border-radius:4px;box-shadow:0 1px 4px rgba(60,70,50,.10);"></div>
<div class="t" style="left:971.00px;top:256.00px;font-size:10.30px;color:#1a1c22;font-weight:400;letter-spacing:-0.179px;-webkit-text-stroke:0.38px #1a1c22;">Order</div>
<div class="t" style="left:971.20px;top:274.00px;font-size:21.40px;color:#121418;font-weight:400;transform:scaleX(1.1083);transform-origin:left;-webkit-text-stroke:0.38px #121418;-webkit-text-stroke-width:0.3px;">$420</div>
<div class="t" style="left:971.20px;top:301.00px;font-size:9.00px;color:#6b7280;font-weight:400;letter-spacing:0.183px;">Total Order</div>
<div class="t" style="left:970.90px;top:353.00px;font-size:9.20px;color:#5b6270;font-weight:400;letter-spacing:0.031px;">Last</div>
<div class="t" style="left:1004.70px;top:352.00px;font-size:11.60px;color:#1f6fd8;font-weight:400;letter-spacing:-0.128px;">30 Days</div>
<svg class="r" style="left:1049.30px;top:355.30px;" width="6" height="4" viewBox="0 0 6 4"><path d="M0.2 0.2 H5.8 L3 3.2 Z" fill="#1f6fd8"/></svg>
<svg class="r" style="left:1145.90px;top:353.00px;" width="13" height="10" viewBox="0 0 13 10"><path d="M1.2 5 H11.2 M7.5 1.2 L11.3 5 L7.5 8.8" fill="none" stroke="#1f6fd8" stroke-width="1.4" stroke-linecap="round" stroke-linejoin="round"/></svg>
<svg class="r" style="left:1148.90px;top:254.60px;" width="6" height="13" viewBox="0 0 6 13"><circle cx="3" cy="3.05" r="1.3" fill="#0d1020"/><circle cx="3" cy="6.95" r="1.3" fill="#0d1020"/><circle cx="3" cy="10.85" r="1.3" fill="#0d1020"/></svg>
<div class="r" style="left:249.00px;top:402.20px;width:452.00px;height:271.80px;background:#ffffff;border-radius:4px;box-shadow:0 1px 4px rgba(60,70,50,.10);"></div>
<div class="t" style="left:262.70px;top:416.00px;font-size:11.60px;color:#1a1c22;font-weight:400;letter-spacing:0.135px;-webkit-text-stroke:0.38px #1a1c22;">Products Overview</div>
<div class="r" style="left:249.00px;top:441.00px;width:452.00px;height:1.00px;background:#eceef1;border-radius:0px;"></div>
<div class="t" style="left:621.00px;top:416.00px;font-size:9.40px;color:#2a6fd6;font-weight:400;letter-spacing:-0.023px;-webkit-text-stroke:0.38px #2a6fd6;-webkit-text-stroke-width:0.18px;">Add Product</div>
<svg class="r" style="left:675.00px;top:416.00px;" width="12" height="12" viewBox="0 0 12 12"><circle cx="6" cy="6" r="4.6" fill="none" stroke="#2a6fd6" stroke-width="1.3"/><path d="M6 3.8 V8.2 M3.8 6 H8.2" stroke="#2a6fd6" stroke-width="1.3"/></svg>
<svg class="r" style="left:285.25px;top:457.80px;" width="194.0" height="194.0" viewBox="0 0 194.0 194.0"><path d="M97.000 0.000 A97.0 97.0 0 0 1 165.589 165.589 L141.406 141.406 A62.8 62.8 0 0 0 97.000 34.200 Z" fill="#1d66d6" stroke="#fff" stroke-width="0.4"/><path d="M165.589 165.589 A97.0 97.0 0 0 1 125.231 189.801 L115.277 157.082 A62.8 62.8 0 0 0 141.406 141.406 Z" fill="#f59e1a" stroke="#fff" stroke-width="0.4"/><path d="M125.231 189.801 A97.0 97.0 0 0 1 51.342 182.582 L67.440 152.408 A62.8 62.8 0 0 0 115.277 157.082 Z" fill="#2f3545" stroke="#fff" stroke-width="0.4"/><path d="M51.342 182.582 A97.0 97.0 0 0 1 26.290 163.401 L51.221 139.990 A62.8 62.8 0 0 0 67.440 152.408 Z" fill="#22c383" stroke="#fff" stroke-width="0.4"/><path d="M26.290 163.401 A97.0 97.0 0 0 1 9.232 55.699 L40.177 70.261 A62.8 62.8 0 0 0 51.221 139.990 Z" fill="#ff7352" stroke="#fff" stroke-width="0.4"/><path d="M9.232 55.699 A97.0 97.0 0 0 1 97.000 0.000 L97.000 34.200 A62.8 62.8 0 0 0 40.177 70.261 Z" fill="#e8ecf5" stroke="#fff" stroke-width="0.4"/></svg>
<div class="t" style="left:182.00px;width:400px;text-align:center;top:549.00px;font-size:16.00px;color:#2b2d33;font-weight:400;letter-spacing:-0.584px;">37.5%</div>
<div class="t" style="left:522.00px;top:471.00px;font-size:10.60px;color:#1a1c22;font-weight:400;letter-spacing:-0.214px;-webkit-text-stroke:0.38px #1a1c22;">Cloth Market Cap</div>
<div class="t" style="left:522.00px;top:485.00px;font-size:14.50px;color:#1d5fd6;font-weight:400;letter-spacing:0.074px;-webkit-text-stroke:0.38px #1d5fd6;">272.07M</div>
<div class="t" style="left:522.00px;top:512.00px;font-size:10.00px;color:#6b7280;font-weight:400;letter-spacing:0.102px;">Overview</div>
<div class="r" style="left:521.60px;top:532.50px;width:10.60px;height:10.60px;background:#1d66d6;border-radius:3px;"></div>
<div class="t" style="left:537.80px;top:533.00px;font-size:9.60px;color:#6b7280;font-weight:400;letter-spacing:-0.124px;">Cloths</div>
<div class="t" style="right:543.50px;top:533.00px;font-size:9.10px;color:#2b2d33;font-weight:400;text-align:right;letter-spacing:-0.008px;-webkit-text-stroke:0.38px #2b2d33;-webkit-text-stroke-width:0.3px;">37.5%</div>
<div class="r" style="left:521.60px;top:550.90px;width:10.60px;height:10.60px;background:#f59e1a;border-radius:3px;"></div>
<div class="t" style="left:537.80px;top:552.00px;font-size:9.60px;color:#6b7280;font-weight:400;letter-spacing:-0.097px;">Furnitur</div>
<div class="t" style="right:543.50px;top:552.00px;font-size:9.10px;color:#2b2d33;font-weight:400;text-align:right;letter-spacing:-0.090px;-webkit-text-stroke:0.38px #2b2d33;-webkit-text-stroke-width:0.3px;">7.8%</div>
<div class="r" style="left:521.60px;top:569.40px;width:10.60px;height:10.60px;background:#2f3545;border-radius:3px;"></div>
<div class="t" style="left:537.80px;top:570.00px;font-size:9.60px;color:#6b7280;font-weight:400;letter-spacing:-0.330px;">Shoes</div>
<div class="t" style="right:543.50px;top:570.00px;font-size:9.10px;color:#2b2d33;font-weight:400;text-align:right;letter-spacing:-0.183px;-webkit-text-stroke:0.38px #2b2d33;-webkit-text-stroke-width:0.3px;">12.5%</div>
<div class="r" style="left:521.60px;top:588.00px;width:10.60px;height:10.60px;background:#22c383;border-radius:3px;"></div>
<div class="t" style="left:537.80px;top:589.00px;font-size:9.60px;color:#6b7280;font-weight:400;letter-spacing:0.117px;">Toys</div>
<div class="t" style="right:543.50px;top:589.00px;font-size:9.10px;color:#2b2d33;font-weight:400;text-align:right;letter-spacing:0.443px;-webkit-text-stroke:0.38px #2b2d33;-webkit-text-stroke-width:0.3px;">5.2%</div>
<div class="r" style="left:521.60px;top:606.60px;width:10.60px;height:10.60px;background:#ff7352;border-radius:3px;"></div>
<div class="t" style="left:537.80px;top:607.00px;font-size:9.60px;color:#6b7280;font-weight:400;letter-spacing:-0.114px;">Electronics</div>
<div class="t" style="right:543.50px;top:607.00px;font-size:9.10px;color:#2b2d33;font-weight:400;text-align:right;letter-spacing:-0.370px;-webkit-text-stroke:0.38px #2b2d33;-webkit-text-stroke-width:0.3px;">19%</div>
<div class="r" style="left:521.60px;top:625.70px;width:10.60px;height:10.60px;background:#e8ecf5;border-radius:3px;"></div>
<div class="t" style="left:537.80px;top:626.00px;font-size:9.60px;color:#6b7280;font-weight:400;letter-spacing:-0.223px;">Others</div>
<div class="t" style="right:543.50px;top:626.00px;font-size:9.10px;color:#2b2d33;font-weight:400;text-align:right;letter-spacing:-0.370px;-webkit-text-stroke:0.38px #2b2d33;-webkit-text-stroke-width:0.3px;">18%</div>
<div class="r" style="left:720.90px;top:402.20px;width:452.50px;height:271.80px;background:#ffffff;border-radius:4px;box-shadow:0 1px 4px rgba(60,70,50,.10);"></div>
<div class="t" style="left:735.40px;top:421.00px;font-size:11.30px;color:#1a1c22;font-weight:400;letter-spacing:0.373px;-webkit-text-stroke:0.38px #1a1c22;">Visitors</div>
<div class="r" style="left:973.70px;top:413.20px;width:43.00px;height:27.30px;background:#1c63d6;border-radius:4px;"></div>
<div class="t" style="left:795.20px;width:400px;text-align:center;top:422.00px;font-size:9.60px;color:#fff;font-weight:400;letter-spacing:-0.292px;">Week</div>
<div class="r" style="left:1024.50px;top:413.20px;width:46.80px;height:27.30px;background:#f2f3f6;border-radius:4px;"></div>
<div class="t" style="left:847.90px;width:400px;text-align:center;top:422.00px;font-size:9.60px;color:#2b2d33;font-weight:400;letter-spacing:0.003px;">Month</div>
<div class="r" style="left:1079.20px;top:413.20px;width:38.20px;height:27.30px;background:#f2f3f6;border-radius:4px;"></div>
<div class="t" style="left:898.30px;width:400px;text-align:center;top:422.00px;font-size:9.60px;color:#2b2d33;font-weight:400;letter-spacing:-0.236px;">Year</div>
<div class="r" style="left:1126.00px;top:413.20px;width:29.50px;height:27.30px;background:#f2f3f6;border-radius:4px;"></div>
<div class="t" style="left:940.75px;width:400px;text-align:center;top:422.00px;font-size:9.60px;color:#2b2d33;font-weight:400;letter-spacing:-0.194px;">All</div>
<div class="r" style="left:721.00px;top:451.50px;width:452.00px;height:1.00px;background:#eceef1;border-radius:0px;"></div>
<div class="t" style="left:735.40px;top:468.00px;font-size:14.50px;color:#15171c;font-weight:400;letter-spacing:0.460px;-webkit-text-stroke:0.38px #15171c;">70200k</div>
<div class="t" style="left:789.20px;top:474.00px;font-size:8.40px;color:#1fb890;font-weight:400;letter-spacing:0.388px;-webkit-text-stroke:0.38px #1fb890;">+2.7%</div>
<div class="t" style="right:474.80px;top:503.00px;font-size:10.00px;color:#3a3d44;font-weight:400;text-align:right;transform:scaleX(0.9946);transform-origin:right;">100</div>
<div class="t" style="right:474.80px;top:527.00px;font-size:10.00px;color:#3a3d44;font-weight:400;text-align:right;transform:scaleX(1.1189);transform-origin:right;">80</div>
<div class="t" style="right:474.80px;top:552.00px;font-size:10.00px;color:#3a3d44;font-weight:400;text-align:right;transform:scaleX(1.1189);transform-origin:right;">60</div>
<div class="t" style="right:474.80px;top:576.00px;font-size:10.00px;color:#3a3d44;font-weight:400;text-align:right;transform:scaleX(1.1189);transform-origin:right;">40</div>
<div class="t" style="right:474.80px;top:601.00px;font-size:10.00px;color:#3a3d44;font-weight:400;text-align:right;transform:scaleX(1.1189);transform-origin:right;">20</div>
<div class="t" style="right:474.80px;top:626.00px;font-size:10.00px;color:#3a3d44;font-weight:400;text-align:right;">0</div>
<div class="r" style="left:783.30px;top:523.31px;width:9.00px;height:110.89px;background:#1c63d6;border-radius:0px;"></div>
<div class="t" style="left:587.80px;width:400px;text-align:center;top:645.00px;font-size:10.00px;color:#3a3d44;font-weight:400;letter-spacing:0.438px;">Jan</div>
<div class="r" style="left:831.96px;top:560.69px;width:9.00px;height:73.51px;background:#1c63d6;border-radius:0px;"></div>
<div class="t" style="left:636.46px;width:400px;text-align:center;top:645.00px;font-size:10.00px;color:#3a3d44;font-weight:400;letter-spacing:0.133px;">Feb</div>
<div class="r" style="left:880.62px;top:548.23px;width:9.00px;height:85.97px;background:#1c63d6;border-radius:0px;"></div>
<div class="t" style="left:685.12px;width:400px;text-align:center;top:645.00px;font-size:10.00px;color:#3a3d44;font-weight:400;letter-spacing:0.683px;">Mar</div>
<div class="r" style="left:929.28px;top:579.38px;width:9.00px;height:54.82px;background:#1c63d6;border-radius:0px;"></div>
<div class="t" style="left:733.78px;width:400px;text-align:center;top:645.00px;font-size:10.00px;color:#3a3d44;font-weight:400;letter-spacing:0.496px;">April</div>
<div class="r" style="left:977.94px;top:585.61px;width:9.00px;height:48.59px;background:#1c63d6;border-radius:0px;"></div>
<div class="t" style="left:782.44px;width:400px;text-align:center;top:645.00px;font-size:10.00px;color:#3a3d44;font-weight:400;letter-spacing:0.647px;">May</div>
<div class="r" style="left:1026.60px;top:575.64px;width:9.00px;height:58.56px;background:#1c63d6;border-radius:0px;"></div>
<div class="t" style="left:831.10px;width:400px;text-align:center;top:645.00px;font-size:10.00px;color:#3a3d44;font-weight:400;letter-spacing:0.604px;">June</div>
<div class="r" style="left:1075.26px;top:600.56px;width:9.00px;height:33.64px;background:#1c63d6;border-radius:0px;"></div>
<div class="t" style="left:879.76px;width:400px;text-align:center;top:645.00px;font-size:10.00px;color:#3a3d44;font-weight:400;letter-spacing:0.568px;">July</div>
<div class="r" style="left:1123.92px;top:598.07px;width:9.00px;height:36.13px;background:#1c63d6;border-radius:0px;"></div>
<div class="t" style="left:928.42px;width:400px;text-align:center;top:645.00px;font-size:10.00px;color:#3a3d44;font-weight:400;letter-spacing:0.552px;">Aug</div>
<div class="r" style="left:249.00px;top:694.00px;width:452.00px;height:136.00px;background:#ffffff;border-radius:4px;box-shadow:0 1px 4px rgba(60,70,50,.10);"></div>
<div class="t" style="left:262.90px;top:714.00px;font-size:11.60px;color:#1a1c22;font-weight:400;letter-spacing:-0.118px;-webkit-text-stroke:0.38px #1a1c22;">Revenue Updates</div>
<div class="r" style="left:501.60px;top:706.00px;width:43.00px;height:26.60px;background:#1c63d6;border-radius:4px;"></div>
<div class="t" style="left:323.10px;width:400px;text-align:center;top:715.00px;font-size:9.60px;color:#fff;font-weight:400;letter-spacing:-0.292px;">Week</div>
<div class="r" style="left:552.80px;top:706.00px;width:45.60px;height:26.60px;background:#f2f3f6;border-radius:4px;"></div>
<div class="t" style="left:375.60px;width:400px;text-align:center;top:715.00px;font-size:9.60px;color:#2b2d33;font-weight:400;letter-spacing:0.003px;">Month</div>
<div class="r" style="left:606.60px;top:706.00px;width:37.90px;height:26.60px;background:#f2f3f6;border-radius:4px;"></div>
<div class="t" style="left:425.55px;width:400px;text-align:center;top:715.00px;font-size:9.60px;color:#2b2d33;font-weight:400;letter-spacing:-0.236px;">Year</div>
<div class="r" style="left:652.70px;top:706.00px;width:30.70px;height:26.60px;background:#f2f3f6;border-radius:4px;"></div>
<div class="t" style="left:468.05px;width:400px;text-align:center;top:715.00px;font-size:9.60px;color:#2b2d33;font-weight:400;letter-spacing:-0.194px;">All</div>
<div class="r" style="left:249.00px;top:743.70px;width:452.00px;height:1.00px;background:#eceef1;border-radius:0px;"></div>
<div class="t" style="left:262.90px;top:761.00px;font-size:14.50px;color:#15171c;font-weight:400;letter-spacing:-0.456px;-webkit-text-stroke:0.38px #15171c;">$18,217k</div>
<div class="t" style="left:323.20px;top:767.00px;font-size:8.40px;color:#1fb890;font-weight:400;letter-spacing:0.238px;-webkit-text-stroke:0.38px #1fb890;">+2.7%</div>
<div class="t" style="left:266.40px;top:799.00px;font-size:10.00px;color:#3a3d44;font-weight:400;letter-spacing:-0.094px;">120</div>
<div class="r" style="left:720.90px;top:694.00px;width:452.50px;height:136.00px;background:#ffffff;border-radius:4px;box-shadow:0 1px 4px rgba(60,70,50,.10);"></div>
<div class="t" style="left:735.20px;top:714.00px;font-size:11.60px;color:#1a1c22;font-weight:400;letter-spacing:0.276px;-webkit-text-stroke:0.38px #1a1c22;">Support</div>
<div class="r" style="left:935.20px;top:706.00px;width:101.50px;height:26.60px;background:#1c63d6;border-radius:4px;"></div>
<div class="t" style="left:785.95px;width:400px;text-align:center;top:715.00px;font-size:9.60px;color:#fff;font-weight:400;letter-spacing:-0.206px;">Common Questions</div>
<div class="r" style="left:1045.10px;top:706.00px;width:110.20px;height:26.60px;background:#f2f3f6;border-radius:4px;"></div>
<div class="t" style="left:900.20px;width:400px;text-align:center;top:715.00px;font-size:9.60px;color:#2b2d33;font-weight:400;letter-spacing:-0.136px;">Ticket &amp; Chat Support</div>
<div class="r" style="left:721.00px;top:743.30px;width:452.00px;height:1.00px;background:#eceef1;border-radius:0px;"></div>
<div class="r" style="left:735.30px;top:758.40px;width:206.50px;height:51.30px;background:#fff;border-radius:4px;border:1px solid #dbe3f5;"></div>
<div class="t" style="left:747.60px;top:773.00px;font-size:9.80px;color:#2a6fd6;font-weight:400;letter-spacing:-0.187px;-webkit-text-stroke:0.38px #2a6fd6;-webkit-text-stroke-width:0.15px;">United Kingdom</div>
<div class="t" style="left:747.60px;top:787.00px;font-size:9.80px;color:#2b2d33;font-weight:400;letter-spacing:-0.140px;-webkit-text-stroke:0.38px #2b2d33;-webkit-text-stroke-width:0.12px;">0808-189-1224</div>
<div class="r" style="left:735.30px;top:817.60px;width:206.50px;height:22.40px;background:#fff;border-radius:4px;border:1px solid #dbe3f5;"></div>
<div class="r" style="left:953.00px;top:758.40px;width:206.60px;height:51.30px;background:#fff;border-radius:4px;border:1px solid #dbe3f5;"></div>
<div class="t" style="left:965.30px;top:773.00px;font-size:9.80px;color:#2a6fd6;font-weight:400;letter-spacing:-0.238px;-webkit-text-stroke:0.38px #2a6fd6;-webkit-text-stroke-width:0.15px;">Indonesia</div>
<div class="t" style="left:965.30px;top:787.00px;font-size:9.80px;color:#2b2d33;font-weight:400;letter-spacing:-0.089px;-webkit-text-stroke:0.38px #2b2d33;-webkit-text-stroke-width:0.12px;">803-015-203-9781</div>
<div class="r" style="left:953.00px;top:817.60px;width:206.60px;height:22.40px;background:#fff;border-radius:4px;border:1px solid #dbe3f5;"></div>
</body></html>
